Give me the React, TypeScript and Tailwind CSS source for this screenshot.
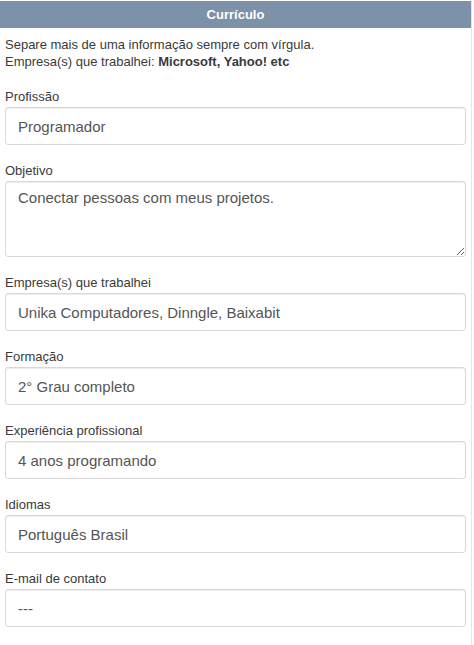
import { useState } from "react";

const fields = [
  { id: "profissao", label: "Profissão", value: "Programador" },
  { id: "objetivo", label: "Objetivo", value: "Conectar pessoas com meus projetos.", multiline: true },
  { id: "empresas", label: "Empresa(s) que trabalhei", value: "Unika Computadores, Dinngle, Baixabit" },
  { id: "formacao", label: "Formação", value: "2° Grau completo" },
  { id: "experiencia", label: "Experiência profissional", value: "4 anos programando" },
  { id: "idiomas", label: "Idiomas", value: "Português Brasil" },
  { id: "email", label: "E-mail de contato", value: "---" },
];

export default function App() {
  const [values, setValues] = useState<Record<string, string>>(
    Object.fromEntries(fields.map((f) => [f.id, f.value]))
  );

  const inputClass =
    "w-full px-[12px] border border-[#d9d9d9] rounded-[3px] bg-white text-[15px] text-[#555] shadow-[inset_0_1px_1px_rgba(0,0,0,0.075)] outline-none";

  return (
    <div className="min-h-screen bg-white font-['Liberation_Sans',Arial,sans-serif] flex">
      <div className="w-[472px] border-r border-[#e6e6e6] pt-[1px]">
        <div className="h-[27px] bg-[#7d91a8] text-white font-bold text-[13px] flex items-center justify-center">
          Currículo
        </div>

        <div className="px-[5px]">
          <p className="mt-[8px] text-[13px] leading-[17px] text-[#3a3a3a]">
            Separe mais de uma informação sempre com vírgula.
            <br />
            Empresa(s) que trabalhei: <b>Microsoft, Yahoo! etc</b>
          </p>

          <form className="mt-[17px]">
            {fields.map((f) => (
              <div key={f.id} className="mb-[16px]">
                <label
                  htmlFor={f.id}
                  className="block pt-[2px] text-[13px] leading-[16px] text-[#3a3a3a] mb-[2px]"
                >
                  {f.label}
                </label>
                {f.multiline ? (
                  <textarea
                    id={f.id}
                    value={values[f.id]}
                    onChange={(e) => setValues({ ...values, [f.id]: e.target.value })}
                    className={inputClass + " h-[76px] py-[6px] leading-[20px] block"}
                  />
                ) : (
                  <input
                    id={f.id}
                    type="text"
                    value={values[f.id]}
                    onChange={(e) => setValues({ ...values, [f.id]: e.target.value })}
                    className={inputClass + " h-[38px]"}
                  />
                )}
              </div>
            ))}
          </form>
        </div>
      </div>
    </div>
  );
}
